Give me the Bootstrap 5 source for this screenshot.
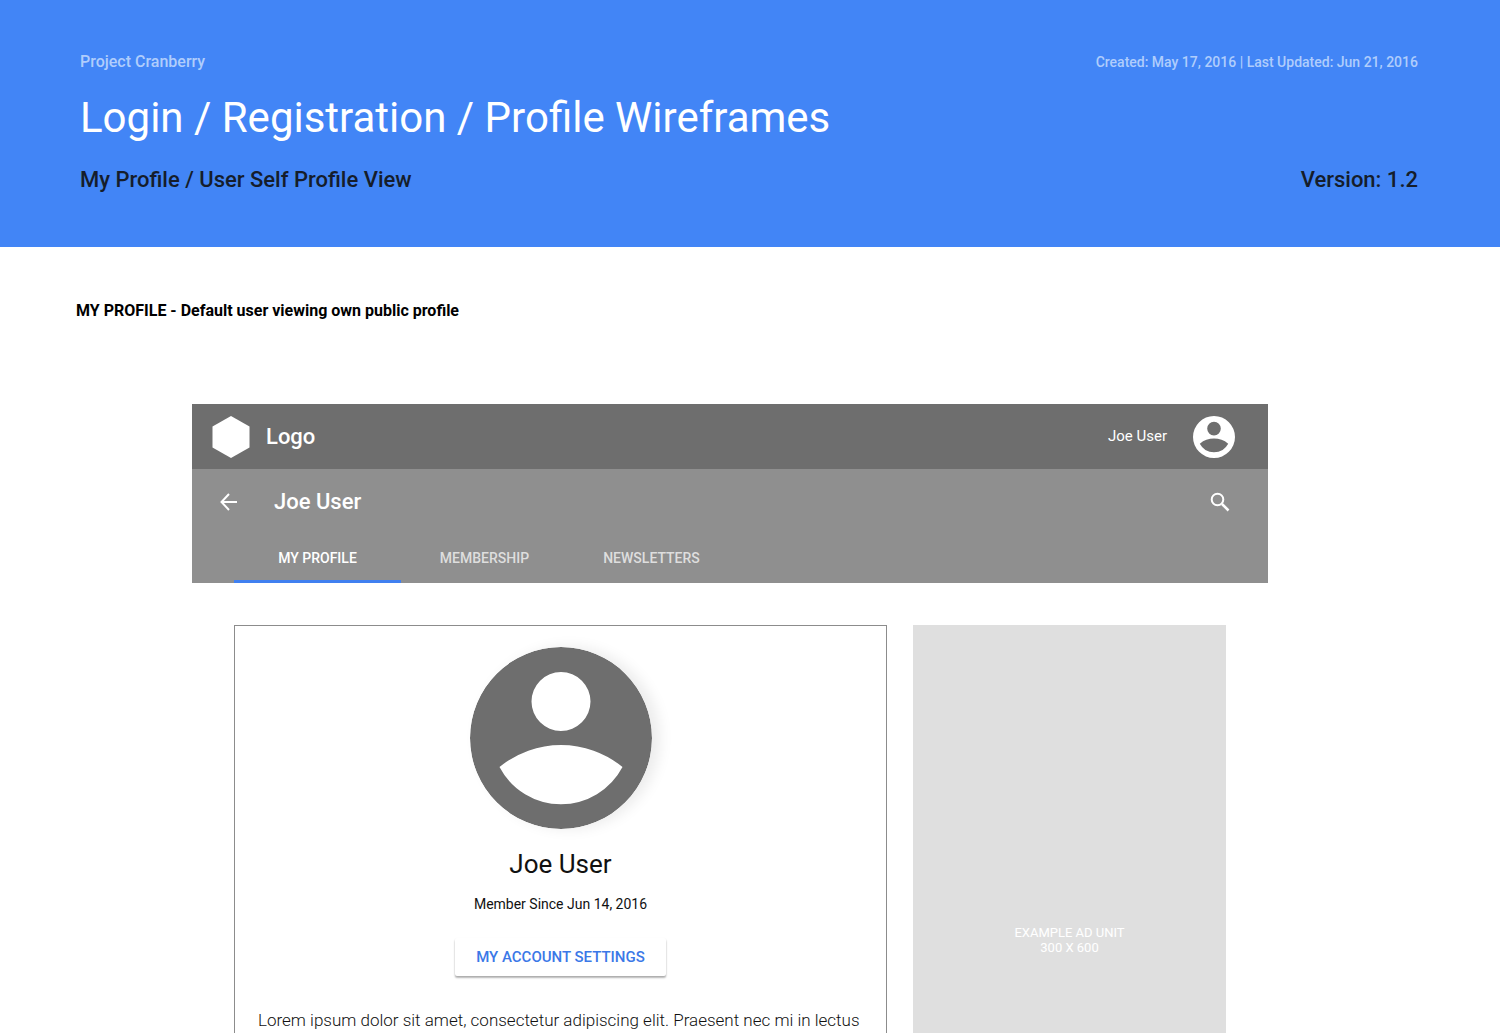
<!DOCTYPE html>
<html lang="en">
<head>
<meta charset="utf-8">
<meta name="viewport" content="width=device-width, initial-scale=1">
<title>Login / Registration / Profile Wireframes</title>
<link href="https://cdn.jsdelivr.net/npm/bootstrap@5.3.0/dist/css/bootstrap.min.css" rel="stylesheet">
<style>
  body { font-family: Roboto, sans-serif; color: #000; background: #fff; }
  .sheet-head { background: #4285f6; padding: 50px 82px 53px 80px; }
  .sheet-meta { color: #b0cdfc; font-size: 16px; line-height: 24px; font-weight: 500; }
  .sheet-dates { font-size: 14px; }
  .sheet-title { color: #fff; font-size: 42px; line-height: 50px; margin: 19px 0 23px; }
  .sheet-sub { color: #151d2b; font-size: 22px; line-height: 28px; font-weight: 500; }
  .frame-label { font-size: 16px; line-height: 24px; padding: 52px 76px 81px; }
  .frame { margin: 0 232px 0 192px; }
  .top-bar { background: #6e6e6e; height: 65px; padding: 0 33px 0 20px; }
  .brand { font-size: 22px; gap: 16px; font-weight: 500; }
  .user-link { font-size: 15px; gap: 26px; }
  .sub-bar { background: #8f8f8f; }
  .title-row { height: 65px; padding: 0 36px 0 25px; gap: 33px; }
  .title-row h2 { font-size: 22px; line-height: 28px; font-weight: 500; }
  .tab-row { padding: 0 42px; }
  .tab-row .nav-link { width: 167px; height: 49px; padding: 3px 0 0; font-size: 14px; line-height: 42px; font-weight: 500; color: #dedede; border-bottom: 3px solid transparent; }
  .tab-row .nav-link.active { color: #fff; border-bottom-color: #4080f0; }
  .frame-body { padding: 42px 42px 0; gap: 26px; }
  .profile { border: 1px solid #8c8c8c; padding: 21px 23px 24px; }
  .avatar { background: #fff; border-radius: 50%; box-shadow: 8px 0 14px rgba(0, 0, 0, .08); }
  .profile-name { font-size: 26px; line-height: 32px; margin: 19px 0 12px; color: #111; }
  .since { font-size: 14px; line-height: 24px; margin-bottom: 22px; color: #111; }
  .settings-btn { width: 211px; height: 38px; padding: 0; font-size: 15px; font-weight: 500; color: #3b78e7; background: #fff; border: 0; border-radius: 2px; box-shadow: 0 2px 2px rgba(0, 0, 0, .26), 0 1px 2px rgba(0, 0, 0, .12); }
  .bio { font-size: 17px; line-height: 26px; font-weight: 300; color: #111; margin-top: 31px; }
  .ad-unit { width: 313px; height: 626px; background: #dfdfdf; color: #fff; font-size: 13px; line-height: 15px; padding-top: 4px; }
</style>
<script src="https://cdn.jsdelivr.net/npm/bootstrap@5.3.0/dist/js/bootstrap.bundle.min.js"></script>
</head>
<body class="vh-100 overflow-hidden">
<svg class="d-none" aria-hidden="true">
  <symbol id="person" viewBox="0 0 182 182">
    <path fill="currentColor" fill-rule="evenodd" d="M91 0a91 91 0 1 1 0 182a91 91 0 1 1 0-182zM91 25a29.500 29.500 0 1 0 0 59a29.500 29.500 0 1 0 0-59zM29.500 120A69.500 69.500 0 0 0 152.500 120A97 97 0 0 0 29.500 120z"/>
  </symbol>
</svg>

<header class="sheet-head">
  <div class="sheet-meta d-flex justify-content-between">
    <span>Project Cranberry</span>
    <span class="sheet-dates">Created: May 17, 2016 | Last Updated: Jun 21, 2016</span>
  </div>
  <h1 class="sheet-title fw-normal">Login / Registration / Profile Wireframes</h1>
  <div class="sheet-sub d-flex justify-content-between">
    <span>My Profile / User Self Profile View</span>
    <span>Version: 1.2</span>
  </div>
</header>

<main>
  <p class="frame-label fw-bold mb-0">MY PROFILE - Default user viewing own public profile</p>

  <section class="frame">
    <div class="top-bar text-white d-flex align-items-center justify-content-between">
      <a href="#" class="brand d-flex align-items-center text-white text-decoration-none">
        <svg width="38" height="42" viewBox="0 0 38 42" aria-hidden="true"><path fill="#fff" d="M19 0L37.500 10.500V31.500L19 42L.5 31.500V10.500z"/></svg>
        <span>Logo</span>
      </a>
      <a href="#" class="user-link d-flex align-items-center text-white text-decoration-none">
        <span>Joe User</span>
        <svg width="42" height="42" aria-hidden="true"><use href="#person"/></svg>
      </a>
    </div>

    <div class="sub-bar text-white">
      <div class="title-row d-flex align-items-center">
        <button type="button" class="btn p-0 border-0 lh-1 text-white" aria-label="Back">
          <svg width="24" height="24" viewBox="0 0 24 24" fill="none" stroke="currentColor" stroke-width="2"><path d="M20 12H5M12 4L4.500 12L12 20"/></svg>
        </button>
        <h2 class="mb-0 flex-grow-1">Joe User</h2>
        <button type="button" class="btn p-0 border-0 lh-1 text-white" aria-label="Search">
          <svg width="24" height="24" viewBox="0 0 24 24" fill="none" stroke="currentColor" stroke-width="2"><circle cx="9.500" cy="9.500" r="5.800"/><path stroke-width="2.500" d="M14 14L20.500 20.500"/></svg>
        </button>
      </div>
      <nav class="tab-row nav text-center">
        <a class="nav-link active" aria-current="page" href="#">MY PROFILE</a>
        <a class="nav-link" href="#">MEMBERSHIP</a>
        <a class="nav-link" href="#">NEWSLETTERS</a>
      </nav>
    </div>

    <div class="frame-body d-flex align-items-start">
      <article class="profile flex-fill d-flex flex-column align-items-center">
        <svg class="avatar" width="182" height="182" color="#6e6e6e" role="img" aria-label="Joe User"><use href="#person"/></svg>
        <h3 class="profile-name fw-normal">Joe User</h3>
        <p class="since">Member Since Jun 14, 2016</p>
        <button type="button" class="btn settings-btn">MY ACCOUNT SETTINGS</button>
        <p class="bio w-100 mb-0">Lorem ipsum dolor sit amet, consectetur adipiscing elit. Praesent nec mi in lectus</p>
      </article>
      <aside class="ad-unit flex-shrink-0 d-flex align-items-center justify-content-center text-center">
        <div>EXAMPLE AD UNIT<br>300 X 600</div>
      </aside>
    </div>
  </section>
</main>
</body>
</html>
